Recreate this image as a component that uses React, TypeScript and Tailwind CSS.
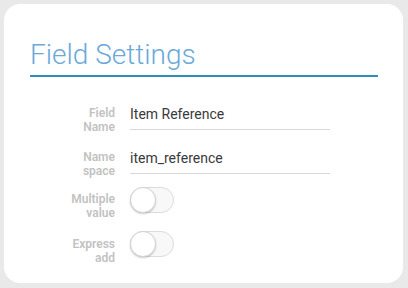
import React from "react";

type FieldRow = {
  label: [string, string];
  value: string;
};

const textRows: FieldRow[] = [
  { label: ["Field", "Name"], value: "Item Reference" },
  { label: ["Name", "space"], value: "item_reference" },
];

const Toggle: React.FC = () => (
  <div className="relative w-[44px] h-[26px] rounded-full border border-[#dcdcdc] bg-[#f8f8f8]">
    <div className="absolute -left-px -top-px w-[26px] h-[26px] rounded-full bg-white border border-[#d4d4d4] shadow-[0_1px_2px_rgba(0,0,0,0.2)]" />
  </div>
);

const Label: React.FC<{ lines: [string, string]; className?: string }> = ({
  lines,
  className,
}) => (
  <div
    className={`w-[85px] shrink-0 text-right text-[12px] leading-[14px] font-semibold text-[#c2c2c2] ${className ?? ""}`}
  >
    <div>{lines[0]}</div>
    <div>{lines[1]}</div>
  </div>
);

const App: React.FC = () => {
  return (
    <div
      className="w-[408px] h-[288px] bg-[#e9e9e9] p-1"
      style={{ fontFamily: "Roboto, 'Liberation Sans', sans-serif" }}
    >
      <div className="w-[399px] h-[279px] bg-white rounded-[16px] pt-[35px] pl-[26px] pr-[25px]">
        <h1 className="text-[28px] leading-[32px] font-light text-[#6aa9da]">
          Field Settings
        </h1>
        <div className="mt-1 h-[1.5px] bg-[#2f8fba]" />

        <div className="mt-[27px] flex flex-col">
          {textRows.map((row, i) => (
            <div
              key={row.value}
              className={`flex gap-[15px] ${i === 0 ? "h-[44px]" : "h-[39px]"}`}
            >
              <Label lines={row.label} className="mt-[2px]" />
              <div className="w-[200px] h-[26px] border-b border-[#d9d9d9] text-[14px] leading-[20px] text-[#3a3a3a]">
                {row.value}
              </div>
            </div>
          ))}

          <div className="flex gap-[15px] h-[44px]">
            <Label lines={["Multiple", "value"]} className="mt-[5px]" />
            <Toggle />
          </div>
          <div className="flex gap-[15px] h-[44px]">
            <Label lines={["Express", "add"]} className="mt-[6px]" />
            <Toggle />
          </div>
        </div>
      </div>
    </div>
  );
};

export default App;
